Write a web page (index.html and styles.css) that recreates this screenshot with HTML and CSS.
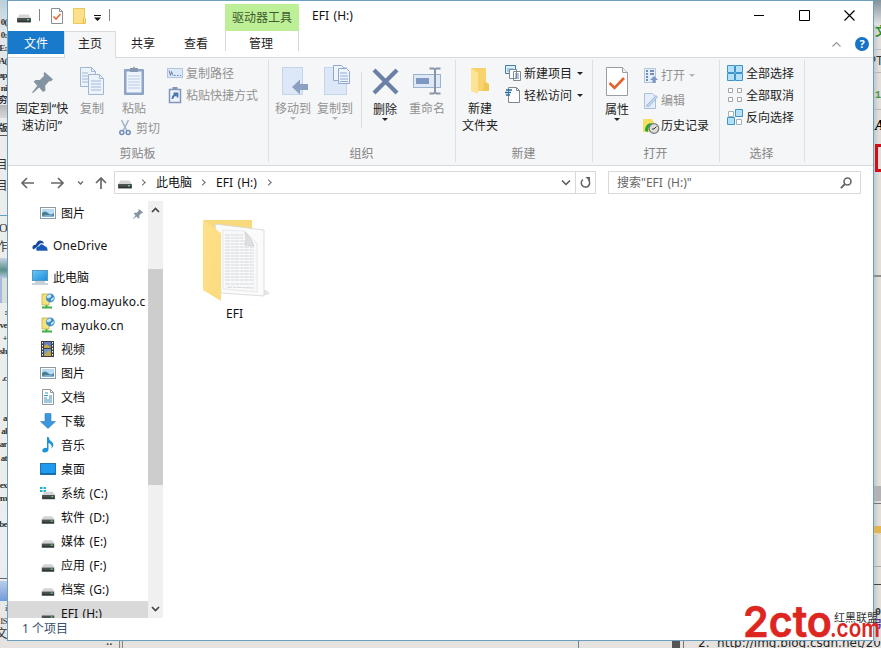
FILE: index.html
```html
<!DOCTYPE html>
<html lang="zh-CN">
<head>
<meta charset="utf-8">
<title>EFI (H:)</title>
<link rel="stylesheet" href="styles.css">
</head>
<body>
<svg class="defs" aria-hidden="true">
  <defs>
    <linearGradient id="gBlue" x1="0" y1="0" x2="1" y2="1"><stop offset="0" stop-color="#6cc6f5"/><stop offset="1" stop-color="#1c8fdc"/></linearGradient>
    <linearGradient id="gFold" x1="0" y1="0" x2="1" y2="1"><stop offset="0" stop-color="#ffe08a"/><stop offset="1" stop-color="#fbdb80"/></linearGradient>
    <symbol id="drive" viewBox="0 0 14 9"><path d="M2.5 0.5h9L14 4H0z" fill="#d3d5d5"/><rect y="4" width="14" height="4.5" rx=".6" fill="#4b5050"/><rect x="1" y="6.6" width="12" height="1.4" fill="#2f3434"/><rect x="10" y="5" width="2" height="1.4" fill="#5fd48a"/></symbol>
    <symbol id="pic" viewBox="0 0 16 12"><rect x=".5" y=".5" width="15" height="11" fill="#fff" stroke="#8d9aa3"/><rect x="2" y="2" width="12" height="8" fill="#b5dcf2"/><path d="M2 6q3-3 6 0t6 0v4H2z" fill="#4c7c92"/><path d="M2 9q6-2 12 0v1H2z" fill="#7fb4d6"/></symbol>
    <symbol id="net" viewBox="0 0 16 16"><path d="M2 1h7v11H2z" fill="#f6e27c" stroke="#c5ad45" stroke-width=".8"/><circle cx="10.3" cy="5" r="4.4" fill="#3f8fc4"/><path d="M7 3q3-3 4-1t-2 3-2-2zM11 6l3-2q0 3-3 4z" fill="#c9e8f5"/><path d="M6.500 12v3M2 14.500h10" stroke="#45ad45" stroke-width="2"/></symbol>
    <symbol id="pin" viewBox="0 0 20 20"><path d="M12 0l8 7-2 2-1.500-.5-4 4.500.3 4.500L10.500 19 6.800 14.800 1 20l-1-.5 5-6.500L1.500 9 3.500 7.500l4 .2L11.500 3.500 11 1.500z"/></symbol>
  </defs>
</svg>

<main class="desktop">
  <div class="backdrop-left">
    <span class="frag f1">0(</span><span class="frag f2">0:</span><span class="frag f3">E:</span><span class="frag f4">A(</span><span class="frag f5">ap</span><span class="frag f6">ni</span><span class="frag f7">穷</span>
    <span class="frag f8">版</span><span class="frag f9">目</span><span class="frag f10">目</span><span class="frag f11">O</span><span class="frag f12">作</span>
    <span class="frag f13">:</span><span class="frag f14">ve</span><span class="frag f15">+</span><span class="frag f16">sh</span><span class="frag f17">.c</span><span class="frag f18">a</span><span class="frag f19">al</span><span class="frag f20">ar</span><span class="frag f21">at</span><span class="frag f22">ex</span><span class="frag f23">em</span><span class="frag f24">be</span><span class="frag f25">i</span><span class="frag f26">IS</span><span class="frag f27">文</span>
    <i class="strip s1"></i><i class="strip s2"></i><i class="strip s3"></i><i class="strip s4"></i><i class="strip s5"></i><i class="strip s6"></i><i class="strip s7"></i>
  </div>
  <div class="backdrop-right">
    <span class="frag r1">文</span><span class="frag r2">PT</span><span class="frag r3">1</span><span class="frag r4">A</span><span class="frag r5">0</span><span class="frag r6">引</span>
    <i class="strip t1"></i><i class="strip t2"></i><i class="strip t3"></i><i class="strip t4"></i><i class="strip t5"></i><i class="strip t6"></i><i class="strip t7"></i><i class="strip t8"></i><i class="strip t9"></i>
    <i class="redbox"></i>
  </div>
  <div class="backdrop-bottom"><i class="bar b1"></i><i class="bar b2"></i><i class="bar b3"></i><i class="bar b4"></i><span class="dots">..</span><span class="link">2.&nbsp; http://img.blog.csdn.net/20</span></div>

  <section class="window">
    <header class="titlebar">
      <div class="quick">
        <svg class="q-drive" width="14" height="9"><use href="#drive"/></svg>
        <i class="q-sep"></i>
        <svg class="q-check" width="12" height="16" viewBox="0 0 12 16"><path d="M.5.5h8l3 3v12H.5z" fill="#fff" stroke="#8b8f94"/><path d="M8.500.5v3h3" fill="none" stroke="#8b8f94"/><path d="M2.500 8.500l2.500 2.500 4.500-5" fill="none" stroke="#e0703a" stroke-width="1.700"/></svg>
        <svg class="q-folder" width="13" height="16" viewBox="0 0 13 16"><path d="M.5.5h11v9l1 1v5H.5z" fill="#fde08a" stroke="#ecc65c"/><path d="M10.500 9.500v6" stroke="#e9bc45"/></svg>
        <svg class="q-menu" width="7" height="6" viewBox="0 0 7 6"><path d="M0 0h7v1H0zM0 2.500h7L3.500 6z" fill="#111"/></svg>
        <i class="q-sep last"></i>
      </div>
      <div class="context-title">驱动器工具</div>
      <h1 class="latin">EFI (H:)</h1>
      <div class="controls">
        <svg width="11" height="11" viewBox="0 0 11 11"><path d="M0 5.500h10" stroke="#000"/></svg>
        <svg width="11" height="11" viewBox="0 0 11 11"><path d="M.5.5h10v10H.5z" fill="none" stroke="#000"/></svg>
        <svg width="11" height="11" viewBox="0 0 11 11"><path d="M.5.5l10 10M10.500.5l-10 10" stroke="#000" stroke-width="1.200"/></svg>
      </div>
    </header>

    <nav class="tabs">
      <span class="tab file">文件</span><span class="tab home">主页</span><span class="tab share">共享</span><span class="tab view">查看</span><span class="tab manage">管理</span>
      <div class="help">
        <svg width="9" height="5" viewBox="0 0 9 5"><path d="M.5 4.500l4-4 4 4" fill="none" stroke="#9a9a9a" stroke-width="1.200"/></svg>
        <b>?</b>
      </div>
    </nav>

    <div class="ribbon">
      <section class="group g-clip">
        <div class="cells">
          <div class="big">
            <span class="art"><svg width="21" height="21" viewBox="0 0 20 20" fill="#8594a3"><use href="#pin"/></svg></span>
            固定到“快<br>速访问”
          </div>
          <div class="big off">
            <span class="art raised"><svg width="26" height="30" viewBox="0 0 26 30"><g fill="#edf3fb" stroke="#a3b5cf"><path d="M1.500 1.500h11l4 4v15h-15z"/><path d="M9.500 8.500h11l4 4v16h-15z"/></g><path d="M12.500 1.500v4h4M20.500 8.500v4h4M3 7h6M3 10h6M3 13h6M3 16h6M12 15h10M12 18h10M12 21h10M12 24h10" fill="none" stroke="#a3b8d8"/></svg></span>
            复制
          </div>
          <div class="paste-col">
            <div class="big off">
              <span class="art raised"><svg width="22" height="32" viewBox="0 0 22 32"><rect x="1" y="4" width="20" height="26" rx="1" fill="#8fa4c4"/><path d="M3.500 6.500h15v21h-15z" fill="#eef4fc"/><path d="M7 3h3q1-3 2 0h3v4H7z" fill="#8797b1"/><path d="M5 11h12M5 14h12M5 17h12M5 20h12M5 23h12" stroke="#b9cce5"/></svg></span>
              粘贴
            </div>
            <div class="small off cut"><svg width="12" height="16" viewBox="0 0 12 16"><path d="M2.500 0L8 11M9.500 0L4 11" stroke="#a0b2cc" stroke-width="1.500"/><g fill="none" stroke="#6f8db8" stroke-width="1.500"><circle cx="2.800" cy="12.500" r="2"/><circle cx="9.200" cy="12.500" r="2"/></g></svg>剪切</div>
          </div>
          <div class="stack">
            <div class="small off"><svg width="16" height="16" viewBox="0 0 16 16"><rect x=".5" y="3.500" width="15" height="9" fill="#dce9f8" stroke="#b3c5dd"/><path d="M2 5.500l1.500 5 1-4 1.500 4M7 10.500h1.500M10 10.500h1.500M13 10.500h1" fill="none" stroke="#6b83a8"/></svg>复制路径</div>
            <div class="small off"><svg width="16" height="16" viewBox="0 0 16 16"><path d="M2.500 2.500h11v13h-11z" fill="#eef4fc" stroke="#8297b8" stroke-width="1.500"/><path d="M5.500 0h5v3h-5z" fill="#8297b8"/><path d="M5.500 12q0-4 4-4M6.500 6.500h4v4" fill="none" stroke="#4c74b0" stroke-width="1.800"/></svg>粘贴快捷方式</div>
          </div>
        </div>
        <h2>剪贴板</h2>
      </section>

      <section class="group g-org">
        <div class="cells">
          <div class="big off">
            <span class="art raised"><svg width="28" height="32" viewBox="0 0 28 32"><rect x="3.500" y="2.500" width="20" height="27" fill="#dce8f8" stroke="#c5d5e9"/><path d="M13 22l8-7.500v4.500h8v6h-8v4.500z" fill="#8ba0c2"/></svg></span>
            移动到<i class="caret"></i>
          </div>
          <div class="big off">
            <span class="art raised"><svg width="28" height="32" viewBox="0 0 28 32"><rect x="3.500" y="2.500" width="22" height="27" fill="#dce8f8" stroke="#c5d5e9"/><g fill="#edf4fc" stroke="#91a9cc"><path d="M12.500.5h8l3 3v12h-11z"/><path d="M17.500 3.500h8l3 3v12h-11z"/></g><path d="M19 8h7M19 11h8M19 14h8M19 16.500h8" stroke="#91a9cc"/></svg></span>
            复制到<i class="caret"></i>
          </div>
          <i class="divider"></i>
          <div class="big low">
            <span class="art raised"><svg width="27" height="27" viewBox="0 0 27 27"><path d="M2 2l23 23M25 2L2 25" stroke="#6a80a7" stroke-width="4.200"/></svg></span>
            删除<i class="caret"></i>
          </div>
          <div class="big off">
            <span class="art raised"><svg width="28" height="28" viewBox="0 0 28 28"><rect x=".5" y="7.500" width="27" height="13" fill="#dfe9f6" stroke="#9cb2d3"/><rect x="3" y="11" width="13" height="6" fill="#7e98c2"/><path d="M16.500 1.500h4l1.500 1 1.500-1h4M22 2v24M16.500 26.500h4l1.500-1 1.500 1h4" fill="none" stroke="#8795aa" stroke-width="2"/></svg></span>
            重命名
          </div>
        </div>
        <h2>组织</h2>
      </section>

      <section class="group g-new">
        <div class="cells">
          <div class="big">
            <span class="art raised"><svg width="20" height="28" viewBox="0 0 20 28"><path d="M1 1h15v14l3 2v7H1z" fill="#f8d36d"/><path d="M1 1l7 5v21l-7-3z" fill="#ffe394"/><path d="M14 15l5 2v7h-6z" fill="#f3c851"/></svg></span>
            新建<br>文件夹
          </div>
          <div class="stack">
            <div class="small"><svg width="16" height="16" viewBox="0 0 16 16"><path d="M.5.5h10v8H.5z" fill="#dcefff" stroke="#467ea5"/><path d="M2 4h6M2 6h3" stroke="#64abd4"/><path d="M4.500 4.500h7v9h-7zM8.500 6.500h7v9h-7z" fill="#fff" stroke="#808a94"/><path d="M10 9h4M10 11h4M10 13h4" stroke="#6989ad"/></svg>新建项目<i class="caret"></i></div>
            <div class="small"><svg width="16" height="16" viewBox="0 0 16 16"><path d="M3.500.5h8l3 3v12h-11z" fill="#fff" stroke="#7c8790"/><path d="M11.500.5v3h3" fill="none" stroke="#7c8790"/><path d="M1 3h6M0 5.500h6M1 8h4" stroke="#246b9e" stroke-width="1.400"/></svg>轻松访问<i class="caret"></i></div>
          </div>
        </div>
        <h2>新建</h2>
      </section>

      <section class="group g-open">
        <div class="cells">
          <div class="big low">
            <span class="art raised"><svg width="22" height="29" viewBox="0 0 22 29"><path d="M.5.5h16l5 5v23H.5z" fill="#fff" stroke="#9a9ea3"/><path d="M16.500.5v5h5" fill="#eee" stroke="#9a9ea3"/><path d="M3.500 16l5 5 9.500-10" fill="none" stroke="#e5622d" stroke-width="2.600"/></svg></span>
            属性<i class="caret"></i>
          </div>
          <div class="stack">
            <div class="small off"><svg width="16" height="16" viewBox="0 0 16 16"><path d="M1.500.5h11v14h-11z" fill="#e5eefa" stroke="#b2c3dc"/><path d="M3 3h2M3 6h2M3 9h2M3 12h2M7 3h4M7 6h4" stroke="#7690ba" stroke-width="1.800"/><path d="M11 8l4 4h-2.500v3h-3v-3H7z" fill="#7e98c2"/></svg>打开<i class="caret"></i></div>
            <div class="small off"><svg width="16" height="16" viewBox="0 0 16 16"><path d="M1.500.5h8l3 3v12h-11z" fill="#e5eefa" stroke="#aabfdc"/><path d="M3 13L13 2.500l1.500 1.500L6 13.500z" fill="#c2d5ef" stroke="#91a9cc" stroke-width=".7"/></svg>编辑</div>
            <div class="small"><svg width="16" height="16" viewBox="0 0 16 16"><path d="M0 1h9l2 3v10H0z" fill="#f5df62"/><path d="M2 13q0-8 7-8l-1 3q-3 0-3 6z" fill="#27a836"/><circle cx="11" cy="10.500" r="4.800" fill="#ddd" stroke="#74797c" stroke-width="1.200"/><path d="M11 11l2.500-2.500M11 11H9" stroke="#333"/></svg>历史记录</div>
          </div>
        </div>
        <h2>打开</h2>
      </section>

      <section class="group g-select">
        <div class="cells">
          <div class="stack">
            <div class="small"><svg width="16" height="16" viewBox="0 0 16 16"><path d="M.5.5h7v7h-7zM8.500.5h7v7h-7zM.5 8.500h7v7h-7zM8.500 8.500h7v7h-7z" fill="#b5e0fa" stroke="#3f94ca"/></svg>全部选择</div>
            <div class="small"><svg width="16" height="16" viewBox="0 0 16 16"><path d="M1.500 1.500h4v4h-4zM10.500 1.500h4v4h-4zM1.500 10.500h4v4h-4zM10.500 10.500h4v4h-4z" fill="#fff" stroke="#a3a5a7"/></svg>全部取消</div>
            <div class="small"><svg width="16" height="16" viewBox="0 0 16 16"><path d="M1.500 2.500h5v5h-5zM9.500 10.500h5v5h-5z" fill="#fff" stroke="#a3b0b8"/><path d="M8.500.5h7v7h-7zM.5 8.500h7v7h-7z" fill="#b5e0fa" stroke="#3f94ca"/></svg>反向选择</div>
          </div>
        </div>
        <h2>选择</h2>
      </section>
    </div>

    <div class="navbar">
      <svg class="arrows" width="106" height="22" viewBox="8 172 106 22" fill="none" stroke="#686868" stroke-width="1.700"><path d="M34 183H22M27 178l-5 5 5 5M51 183h12M58 178l5 5-5 5M101 189v-11M96 183l5-5 5 5"/><path d="M78 181.500l2.500 2.500 2.500-2.500" stroke-width="1.300"/></svg>
      <div class="address">
        <svg class="a-drive" width="14" height="9"><use href="#drive"/></svg>
        <i class="chev"></i><span class="crumb pc">此电脑</span><i class="chev"></i><span class="crumb latin">EFI (H:)</span><i class="chev"></i>
        <svg class="a-down" width="10" height="6" viewBox="0 0 10 6"><path d="M1 .5l4 4 4-4" fill="none" stroke="#555" stroke-width="1.500"/></svg>
        <span class="refresh"><svg width="11" height="12" viewBox="0 0 11 12"><path d="M3 2.500A4.200 4.200 0 1 0 8.500 3" fill="none" stroke="#606060" stroke-width="1.500"/><path d="M5.500 0H10v4.500z" fill="#606060"/></svg></span>
      </div>
      <div class="search"><span class="latin">搜索"EFI (H:)"</span><svg width="12" height="12" viewBox="0 0 12 12"><circle cx="7.500" cy="4.500" r="3.500" fill="none" stroke="#666" stroke-width="1.600"/><path d="M5 7L.8 11.200" stroke="#666" stroke-width="1.900"/></svg></div>
    </div>

    <div class="body">
      <ul class="tree latin">
        <li class="sub gap"><svg width="16" height="12"><use href="#pic"/></svg>图片<svg class="pinned" width="10" height="10" viewBox="0 0 20 20" fill="#8594a3"><use href="#pin"/></svg></li>
        <li class="gap"><svg width="16" height="11" viewBox="0 0 16 11"><path d="M1 9.500Q-1 5 4 4.500 6-1.500 11 1.500l1 2Q7 2 6 7z" fill="#14499c"/><path d="M4.500 11Q2.500 7 7 6q2-4 6 0 3 .5 3 5z" fill="#1757b5" stroke="#fff" stroke-width=".6"/></svg><span class="site">OneDrive</span></li>
        <li><svg width="16" height="16" viewBox="0 0 16 16"><rect x=".5" y="1.500" width="15" height="10" fill="url(#gBlue)" stroke="#5199c6"/><path d="M3 13h10M0 15h16" stroke="#8fa6b5"/></svg>此电脑</li>
        <li class="sub"><svg width="16" height="16"><use href="#net"/></svg><span class="site">blog.mayuko.c</span></li>
        <li class="sub"><svg width="16" height="16"><use href="#net"/></svg><span class="site">mayuko.cn</span></li>
        <li class="sub"><svg width="16" height="16" viewBox="0 0 16 16"><path d="M1 0h13v16H1z" fill="#3d4042"/><path d="M4 1h7v6H4z" fill="#637bc0"/><path d="M4 8h7v7H4z" fill="#6b9ccc"/><path d="M4 5l3-2 4 4H4zM5 13l4-4 2 3v3H4z" fill="#c1a64d"/><path d="M2.500 1v14M12.500 1v14" stroke="#fff" stroke-dasharray="1.500 1.500"/></svg>视频</li>
        <li class="sub"><svg width="16" height="12"><use href="#pic"/></svg>图片</li>
        <li class="sub"><svg width="16" height="16" viewBox="0 0 16 16"><path d="M2.500.5h8l3 3v12h-11z" fill="#fff" stroke="#8f999f"/><path d="M10.500.5v3h3" fill="none" stroke="#8f999f"/><path d="M5 4h3M4 6.500h4M4 9h3M9 7h3M9 9h3M4 11h8M4 13h8" stroke="#3d91b7"/></svg>文档</li>
        <li class="sub"><svg width="16" height="16" viewBox="0 0 16 16"><path d="M5 .5h6v8h4.500L8 15.500.5 8.500H5z" fill="#3b96dc" stroke="#3280bd" stroke-width=".6"/></svg>下载</li>
        <li class="sub"><svg width="16" height="16" viewBox="0 0 16 16"><path d="M7 0h1.500q.5 3 3.500 5 3 3-.5 6.500Q12.500 7 8.500 6v6.500q-.5 3-4 3-3-.5-2-3 1.500-2.500 4.500-1.500z" fill="#1d91da"/></svg>音乐</li>
        <li class="sub"><svg width="16" height="12" viewBox="0 0 16 12"><rect x=".5" y=".5" width="15" height="11" fill="#1e9af0" stroke="#2474a8"/><path d="M1 10.500h14" stroke="#0f6dae"/></svg>桌面</li>
        <li class="sub"><svg width="16" height="16" viewBox="0 0 16 16"><path d="M0 2h2.500v2H0zM3.500 2H6v2H3.500zM0 5h2.500v2H0zM3.500 5H6v2H3.500z" fill="#19b3cc"/><use href="#drive" x="2" y="6" width="13" height="9"/></svg>系统 (C:)</li>
        <li class="sub"><svg width="16" height="16" viewBox="0 0 16 16"><use href="#drive" x="1.500" y="6.500" width="13" height="9"/></svg>软件 (D:)</li>
        <li class="sub"><svg width="16" height="16" viewBox="0 0 16 16"><use href="#drive" x="1.500" y="6.500" width="13" height="9"/></svg>媒体 (E:)</li>
        <li class="sub"><svg width="16" height="16" viewBox="0 0 16 16"><use href="#drive" x="1.500" y="6.500" width="13" height="9"/></svg>应用 (F:)</li>
        <li class="sub"><svg width="16" height="16" viewBox="0 0 16 16"><use href="#drive" x="1.500" y="6.500" width="13" height="9"/></svg>档案 (G:)</li>
        <li class="sub selected"><svg width="16" height="16" viewBox="0 0 16 16"><use href="#drive" x="1.500" y="6.500" width="13" height="9"/></svg>EFI (H:)</li>
      </ul>
      <div class="scrollbar">
        <svg width="9" height="6" viewBox="0 0 9 6"><path d="M1 5l3.500-3.500L8 5" fill="none" stroke="#444" stroke-width="1.700"/></svg>
        <i class="thumb"></i>
        <svg width="9" height="6" viewBox="0 0 9 6"><path d="M1 1l3.500 3.500L8 1" fill="none" stroke="#444" stroke-width="1.700"/></svg>
      </div>
      <div class="files">
        <figure>
          <svg width="68" height="84" viewBox="0 0 68 84">
            <path d="M1 2h49v70H12z" fill="#f8da7d"/>
            <path d="M18 75l47 2 3-2-4-3z" fill="#e5e5e5"/>
            <path d="M13 6l49 6v66l-43-3z" fill="#fbfbfb" stroke="#d6d6d6" stroke-width=".8"/>
            <path d="M21 12l22 1 12 13v48l-34-3z" fill="#f8f9fa" stroke="#dde0e2" stroke-width=".7"/>
            <g stroke="#c8cdd1" stroke-width=".8" stroke-dasharray="5 .8 3 .6"><path d="M23 17h18M23 20h19M23 23h20M23 26h21M23 29h29M23 32h29M23 35h29M23 38h29M23 41h29M23 44h29M23 47h29M23 50h29M23 53h29M23 56h29M23 59h29M23 62h29M23 66h29M25 69l27 1"/></g>
            <path d="M43 14q2 8 0 13l9 1q-3-9-9-14z" fill="#e0e0e0" stroke="#ccc" stroke-width=".7"/>
            <path d="M1 2l18 13v68L1 72z" fill="url(#gFold)"/>
          </svg>
          <figcaption>EFI</figcaption>
        </figure>
      </div>
    </div>
    <footer class="status">1 个项目</footer>
  </section>

  <div class="watermark">
    <svg width="138" height="40" viewBox="0 0 138 40">
      <text class="mark-big" x="0" y="32.500" textLength="89" lengthAdjust="spacingAndGlyphs">2cto</text>
      <text class="mark-cn" x="91" y="18" textLength="44">红黑联盟</text>
      <text class="mark-small" x="87" y="32.500" textLength="50" lengthAdjust="spacingAndGlyphs">.com</text>
    </svg>
  </div>
</main>
</body>
</html>
```
FILE: styles.css
```css
* { box-sizing: border-box; }
body { margin: 0; font: 12px/17px "Noto Sans", "Noto Sans CJK SC", sans-serif; color: #222; }
svg { display: block; flex: none; overflow: visible; }
.defs { position: absolute; width: 0; height: 0; }
i { font-style: normal; }
h1, h2, ul, figure { margin: 0; padding: 0; font-weight: normal; }
.latin { word-spacing: 1.500px; }

.desktop { position: relative; width: 881px; height: 648px; overflow: hidden; background: #e5e2df; }

/* other applications visible around the window */
.backdrop-left { position: absolute; left: 0; top: 0; width: 7px; height: 648px; overflow: hidden; background: linear-gradient(#b9d0da 0, #dfe6ea 30px, #e8e9ea 100px, #ececec 135px, #ebeeee 570px, #e5e2df); }
.frag { position: absolute; right: 0; font: bold 10px/12px "Liberation Mono", "Noto Sans CJK SC", monospace; color: #333; white-space: nowrap; }
.backdrop-left .frag { font: bold 9px/12px "Liberation Serif", "Noto Sans CJK SC", serif; letter-spacing: -.6px; }
.f1 { top: 16px; } .f2 { top: 29px; } .f3 { top: 42px; } .f4 { top: 55px; } .f5 { top: 69px; } .f6 { top: 82px; } .f7 { top: 94px; }
.f8 { top: 122px; } .f9 { top: 159px; } .f10 { top: 180px; } .f11 { top: 222px; } .f12 { top: 241px; }
.f13 { top: 306px; } .f14 { top: 319px; } .f15 { top: 332px; } .f16 { top: 345px; } .f17 { top: 372px; } .f18 { top: 412px; } .f19 { top: 425px; } .f20 { top: 438px; } .f21 { top: 452px; } .f22 { top: 479px; } .f23 { top: 492px; } .f24 { top: 518px; }
.f25 { top: 602px; } .f26 { top: 615px; } .f27 { top: 628px; }
.backdrop-left :is(.f9, .f10, .f11, .f12, .f27) { font-size: 12px; font-weight: normal; }
.backdrop-left :is(.f25, .f26) { font-weight: normal; }
.strip { position: absolute; left: 0; width: 100%; }
.s1 { top: 105px; height: 13px; background: linear-gradient(#b5b5b5, #d8d8d8); }
.s2 { top: 135px; height: 1px; background: #555; }
.s3 { top: 215px; height: 1px; background: #669fc5; }
.s4 { top: 258px; height: 20px; background: linear-gradient(#c7d3e8, #5b9087 60%, #b3c9e1); }
.s5 { top: 278px; height: 25px; background: #d9e0d9; border-left: 2px solid #a9b9dc; }
.s6 { top: 578px; height: 1px; background: #667; }
.s7 { top: 581px; height: 20px; background: linear-gradient(#b9cdec, #729cd9); }

.backdrop-right { position: absolute; left: 874px; top: 0; width: 7px; height: 648px; overflow: hidden; background: linear-gradient(90deg, #bfc9cf, #e2dfdb 5px); }
.backdrop-right .frag { left: 1px; right: auto; }
.r1 { top: 27px; font-size: 12px; color: #278e27; } .r2 { top: 55px; font-family: "Liberation Sans"; font-weight: normal; font-size: 12px; }
.backdrop-right .r2 { left: -6px; }
.r3 { top: 90px; color: #4a9440; } .r4 { top: 118px; font: italic bold 14px/15px "Liberation Serif"; color: #000; }
.r5 { top: 607px; } .r6 { top: 620px; color: #538; }
.t1 { top: 0; height: 25px; background: linear-gradient(#7f929b, #e2e2e2); }
.t2 { top: 49px; height: 1px; background: #b0bfc9; }
.t3 { top: 72px; height: 1px; background: #b9b9b9; }
.t4 { top: 109px; height: 1px; background: #b9b9b9; }
.t5 { top: 275px; height: 2px; background: #8c8c8c; }
.t6 { top: 486px; height: 15px; background: #b2b2b4; }
.t7 { top: 503px; height: 1px; background: #777; }
.t8 { top: 526px; height: 9px; background: #dfb653; border-bottom: 2px solid #dfd5bf; }
.t9 { top: 566px; height: 19px; border-top: 1px solid #aaa; border-bottom: 1px solid #444; }
.redbox { position: absolute; left: 1px; top: 144px; width: 12px; height: 28px; border: 3px solid #cf0e1c; }

.backdrop-bottom { position: absolute; left: 0; top: 641px; width: 881px; height: 7px; overflow: hidden; background: #e5e2df; }
.bar { position: absolute; top: 0; height: 7px; width: 1px; background: #777; }
.b1 { left: 119px; width: 4px; border: solid #888; border-width: 0 1px; background: #ddd; } .b2 { left: 578px; background: #5b88a0; } .b3 { left: 672px; width: 8px; background: #555; } .b4 { left: 683px; }
.dots { position: absolute; left: 106px; top: -9px; }
.link { position: absolute; left: 698px; top: -6px; font: 12px/17px "DejaVu Sans", sans-serif; white-space: nowrap; color: #222; }

/* explorer window */
.window { position: absolute; left: 7px; top: 0; width: 867px; height: 641px; background: #fff; border: 1px solid #6c9fbb; display: flex; flex-direction: column; }

.titlebar { height: 30px; display: flex; flex: none; }
.quick { width: 217px; display: flex; align-items: center; padding-left: 9px; }
.q-drive { margin-top: 4px; }
.q-sep { width: 1px; height: 12px; background: #858585; margin: 0 11px 2px 8px; }
.q-folder { margin-left: 10px; }
.q-menu { margin: 3px 0 0 8px; }
.q-sep.last { margin-left: 8px; }
.context-title { width: 74px; height: 27px; margin-top: 3px; background: #bdf096; text-align: center; line-height: 27px; color: #3e5a30; }
h1 { font-size: 12px; line-height: 29px; margin-left: 13px; color: #111; }
.controls { margin: 9px 18px 0 auto; display: flex; gap: 34px; }

.tabs { height: 27px; flex: none; display: flex; border-bottom: 1px solid #d8dadd; line-height: 25px; text-align: center; }
.file { width: 56px; height: 23px; background: #1979ca; color: #fff; }
.home { width: 52px; height: 27px; border: 1px solid #d8dadd; border-bottom: 0; background: #f5f6f7; line-height: 23px; }
.share { width: 54px; }
.view { width: 52px; }
.manage { width: 74px; height: 20px; margin-left: 3px; border: solid #d5d7d5; border-width: 0 1px; padding-right: 2px; }
.help { margin-left: auto; display: flex; align-items: center; gap: 14px; padding-right: 4px; }
.help b { width: 14px; height: 14px; border-radius: 50%; background: #1673c5; color: #fff; font-size: 11px; line-height: 14px; }

.ribbon { height: 108px; flex: none; display: flex; background: #f5f6f7; border-bottom: 1px solid #d9dadc; }
.group { display: flex; flex-direction: column; height: 107px; background: linear-gradient(#dddfe1, #dddfe1) right 2px / 1px 102px no-repeat; }
.g-clip { width: 261px; } .g-org { width: 187px; } .g-new { width: 137px; } .g-open { width: 127px; } .g-select { width: 85px; }
.group h2 { font-size: 12px; line-height: 19px; color: #858585; text-align: center; padding-right: 2px; }
.cells { height: 86px; display: grid; align-items: start; }
.g-clip .cells { grid-template-columns: 68px 32px 52px 1fr; }
.g-org .cells { grid-template-columns: 48px 36px 9px 46px 38px; }
.g-new .cells, .g-open .cells { grid-template-columns: 48px 1fr; }
.big { display: flow-root; text-align: center; padding-top: 7px; white-space: nowrap; }
.big.low { padding-top: 8px; }
.art { height: 35px; display: flex; justify-content: center; align-items: center; }
.art.raised { padding-bottom: 4px; }
.off { color: #929292; }
.caret { display: block; margin: 0 auto; width: 0; height: 0; border: 3px solid transparent; border-top-color: #222; border-bottom: 0; }
.off .caret { border-top-color: #b5b5b5; }
.stack { padding-top: 4px; }
.small { height: 22px; display: flex; align-items: center; gap: 3px; white-space: nowrap; }
.small .caret { margin: 0 0 0 2px; }
.cut { margin: 2px 0 0 11px; gap: 5px; height: 18px; }
.g-clip .stack { padding-left: 7px; }
.g-new .stack { padding-left: 1px; }
.g-open .stack { padding: 5px 0 0 2px; }
.g-open .small { height: 25px; gap: 2px; }
.g-select .stack { padding-left: 7px; }
.divider { width: 1px; height: 56px; margin: 14px 0 0 8px; background: #dddfe1; }

.navbar { height: 35px; flex: none; display: flex; padding-top: 5px; }
.arrows { margin-top: 1px; }
.address { width: 482px; height: 23px; border: 1px solid #d9d9d9; display: flex; align-items: center; padding-left: 3px; }
.a-drive { margin: 4px 8px 0 0; }
.chev { width: 5px; height: 5px; border: solid #666; border-width: 1.500px 1.500px 0 0; transform: rotate(45deg) scale(.9); }
.crumb { margin: 0 9px 1px 11px; color: #111; }
.crumb.pc { margin-left: 11px; margin-right: 8px; }
.a-down { margin-left: auto; }
.refresh { margin-left: 4px; width: 20px; height: 21px; display: flex; align-items: center; justify-content: center; border-left: 1px solid #d9d9d9; }
.search { width: 253px; height: 23px; margin-left: 12px; border: 1px solid #d9d9d9; display: flex; justify-content: space-between; align-items: center; padding: 0 8px; color: #666; }

.body { height: 417px; flex: none; display: flex; }
.tree { width: 140px; height: 417px; overflow: hidden; list-style: none; color: #111; }
.tree li { height: 24px; display: flex; align-items: center; gap: 5px; padding-left: 24px; white-space: nowrap; }
.tree .sub { padding-left: 32px; }
.tree .gap { margin-bottom: 8px; }
.tree .selected { background: #d9d9d9; }
.pinned { margin: 2px 5px 0 auto; }
.site { letter-spacing: .15px; }
.scrollbar { width: 15px; height: 417px; background: #f0f0f0; display: flex; flex-direction: column; align-items: center; justify-content: space-between; padding: 6px 0; }
.thumb { width: 15px; height: 216px; background: #cdcdcd; margin: 52px 0 117px; }
.files { flex: 1; padding: 17px 0 0 39px; }
.files figure { width: 68px; }
.files figcaption { text-align: center; margin-top: 3px; padding-right: 3px; color: #111; }
.status { flex: 1; line-height: 21px; padding-left: 14px; color: #38506c; }

.watermark { position: absolute; left: 743px; top: 604px; }
.mark-big { font: 600 43px Inter, sans-serif; fill: #dc261f; stroke: #dc261f; stroke-width: .6; stroke-linejoin: round; }
.mark-small { font: 600 25px Inter, sans-serif; fill: #dc261f; }
.mark-cn { font: 11px "Noto Sans CJK SC", sans-serif; fill: #333; }
```
